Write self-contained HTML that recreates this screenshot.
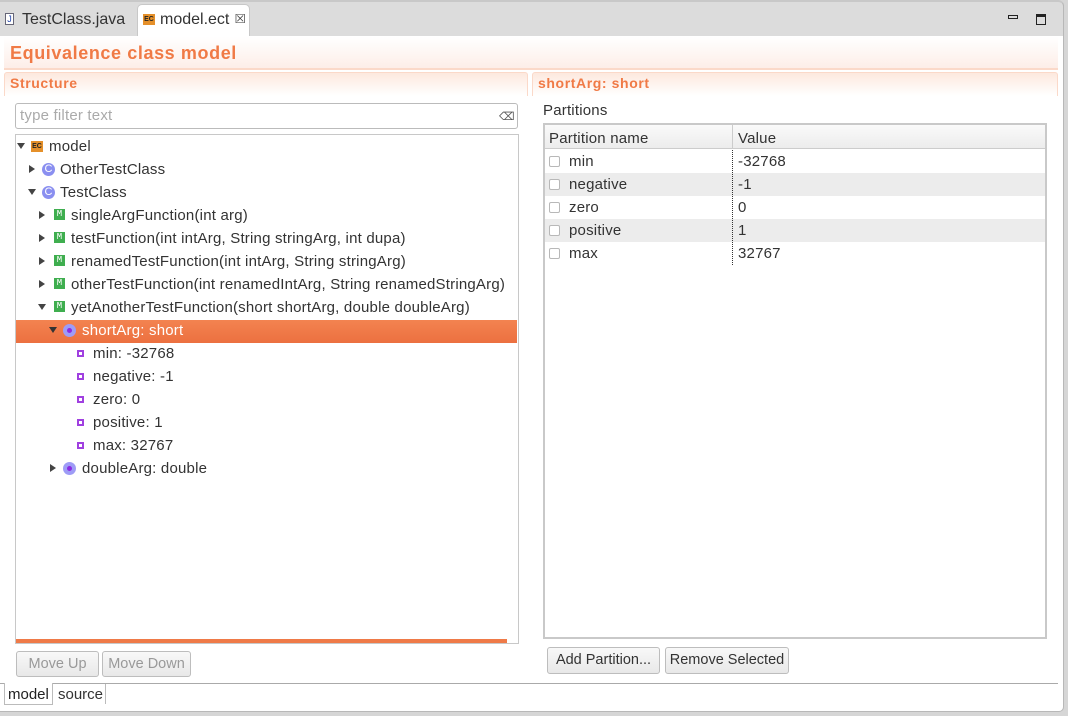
<!DOCTYPE html>
<html><head><meta charset="utf-8"><style>
*{margin:0;padding:0;box-sizing:border-box}
body{width:1068px;height:716px;background:#d6d6d6;font-family:"Liberation Sans",sans-serif;font-size:15px;letter-spacing:0.2px;color:#333;position:relative;overflow:hidden}
.a{position:absolute;white-space:nowrap}
.t{margin-top:1px}
.arr{position:absolute;width:0;height:0}
.rt{border-left:6px solid #444;border-top:4px solid transparent;border-bottom:4px solid transparent}
.dn{border-top:6px solid #444;border-left:4px solid transparent;border-right:4px solid transparent}
.c{position:absolute;width:13px;height:13px;border-radius:50%;background:#8a8ff0;color:#fff;font-size:11px;line-height:13px;text-align:center;letter-spacing:0}
.m{position:absolute;width:11px;height:11px;background:#3fae4f;color:#fff;font-size:9px;line-height:11px;text-align:center;font-family:"Liberation Mono",monospace;letter-spacing:0}
.p{position:absolute;width:13px;height:13px;border-radius:50%;background:#9e9cf6}
.p::after{content:"";position:absolute;left:4px;top:4px;width:5px;height:5px;border-radius:50%;background:#8a2be2}
.lf{position:absolute;width:7px;height:7px;border:2px solid #a040e0;background:#fff}
.btn{position:absolute;border:1px solid #bdbdbd;border-radius:3px;background:linear-gradient(#f8f8f8,#e8e8e8);text-align:center;line-height:25px;font-size:14.5px;letter-spacing:0}
.cb{position:absolute;width:11px;height:11px;border:1px solid #b8b8b8;border-radius:2px;background:#fff}
</style></head><body>
<div class="a" style="left:0;top:0;width:1064px;height:36px;background:#dcdcdc;border-top:2px solid #c8c8c8;border-right:1px solid #b8b8b8;border-radius:0 6px 0 0"></div>
<div class="a" style="left:5px;top:13px;width:9px;height:12px;border:1px solid #667;background:#fff;font-size:9px;line-height:10px;text-align:center;color:#24a;letter-spacing:0">J</div>
<div class="a" style="left:22px;top:11px;font-size:16px;letter-spacing:0">TestClass.java</div>
<div class="a" style="left:137px;top:4px;width:113px;height:33px;background:#fff;border:1px solid #c8c8c8;border-bottom:none;border-radius:5px 5px 0 0"></div>
<div class="a" style="left:143px;top:14px;width:12px;height:11px;background:#e5902a;font-size:7px;font-weight:bold;line-height:11px;text-align:center;color:#222;letter-spacing:0">EC</div>
<div class="a" style="left:160px;top:11px;font-size:16px;letter-spacing:0">model.ect</div>
<div class="a" style="left:235px;top:11px;font-size:13px">⮽</div>
<div class="a" style="left:1008px;top:15px;width:10px;height:4px;border:1px solid #222"></div>
<div class="a" style="left:1036px;top:14px;width:10px;height:11px;border:1px solid #222;border-top:3px solid #222"></div>
<div class="a" style="left:0;top:36px;width:1064px;height:676px;background:#fff;border-right:1px solid #b8b8b8;border-bottom:1px solid #b8b8b8;border-radius:0 0 5px 0"></div>
<div class="a" style="left:4px;top:37px;width:1054px;height:33px;background:linear-gradient(#fff,#fdeee8);border-bottom:2px solid #fbd9c9"></div>
<div class="a" style="left:10px;top:43px;font-size:18px;letter-spacing:0.6px;font-weight:bold;color:#f07a46">Equivalence class model</div>
<div class="a" style="left:4px;top:72px;width:524px;height:24px;background:linear-gradient(#fde8de,#fff);border:1px solid #fbd9c9;border-bottom:none;border-radius:3px 3px 0 0"></div>
<div class="a" style="left:10px;top:75px;font-size:14px;letter-spacing:0.6px;font-weight:bold;color:#f07a46">Structure</div>
<div class="a" style="left:532px;top:72px;width:526px;height:24px;background:linear-gradient(#fde8de,#fff);border:1px solid #fbd9c9;border-bottom:none;border-radius:3px 3px 0 0"></div>
<div class="a" style="left:538px;top:75px;font-size:14px;letter-spacing:0.6px;font-weight:bold;color:#f07a46">shortArg: short</div>
<div class="a" style="left:15px;top:103px;width:503px;height:26px;border:1px solid #bbb;border-radius:3px"></div>
<div class="a" style="left:20px;top:107px;color:#aaa">type filter text</div>
<div class="a" style="left:499px;top:110px;font-size:11px;color:#555">⌫</div>
<div class="a" style="left:15px;top:134px;width:504px;height:510px;border:1px solid #c8c8c8"></div>
<div class="a" style="left:16px;top:320px;width:501px;height:23px;background:linear-gradient(#f38350,#ec7040)"></div>
<div class="a" style="left:16px;top:639px;width:491px;height:4px;background:#ef7a48"></div>

<div class="arr dn" style="left:17px;top:143px"></div><div class="a" style="left:31px;top:141px;width:12px;height:11px;background:#e5902a;font-size:7px;font-weight:bold;line-height:11px;text-align:center;color:#222;letter-spacing:0">EC</div><div class="a t" style="left:49px;top:137px">model</div>
<div class="arr rt" style="left:29px;top:165px"></div><div class="c" style="left:42px;top:163px">C</div><div class="a t" style="left:60px;top:160px">OtherTestClass</div>
<div class="arr dn" style="left:28px;top:189px"></div><div class="c" style="left:42px;top:186px">C</div><div class="a t" style="left:60px;top:183px">TestClass</div>
<div class="arr rt" style="left:39px;top:211px"></div><div class="m" style="left:54px;top:209px">M</div><div class="a t" style="left:71px;top:206px">singleArgFunction(int arg)</div>
<div class="arr rt" style="left:39px;top:234px"></div><div class="m" style="left:54px;top:232px">M</div><div class="a t" style="left:71px;top:229px">testFunction(int intArg, String stringArg, int dupa)</div>
<div class="arr rt" style="left:39px;top:257px"></div><div class="m" style="left:54px;top:255px">M</div><div class="a t" style="left:71px;top:252px">renamedTestFunction(int intArg, String stringArg)</div>
<div class="arr rt" style="left:39px;top:280px"></div><div class="m" style="left:54px;top:278px">M</div><div class="a t" style="left:71px;top:275px">otherTestFunction(int renamedIntArg, String renamedStringArg)</div>
<div class="arr dn" style="left:38px;top:304px"></div><div class="m" style="left:54px;top:301px">M</div><div class="a t" style="left:71px;top:298px">yetAnotherTestFunction(short shortArg, double doubleArg)</div>
<div class="arr dn" style="left:49px;top:327px;border-top-color:#333"></div><div class="p" style="left:63px;top:324px"></div><div class="a t" style="left:82px;top:321px;color:#fff">shortArg: short</div>
<div class="lf" style="left:77px;top:350px"></div><div class="a t" style="left:93px;top:344px">min: -32768</div>
<div class="lf" style="left:77px;top:373px"></div><div class="a t" style="left:93px;top:367px">negative: -1</div>
<div class="lf" style="left:77px;top:396px"></div><div class="a t" style="left:93px;top:390px">zero: 0</div>
<div class="lf" style="left:77px;top:419px"></div><div class="a t" style="left:93px;top:413px">positive: 1</div>
<div class="lf" style="left:77px;top:442px"></div><div class="a t" style="left:93px;top:436px">max: 32767</div>
<div class="arr rt" style="left:50px;top:464px"></div><div class="p" style="left:63px;top:462px"></div><div class="a t" style="left:82px;top:459px">doubleArg: double</div>

<div class="btn" style="left:16px;top:651px;width:83px;height:26px;color:#999">Move Up</div>
<div class="btn" style="left:102px;top:651px;width:89px;height:26px;color:#999">Move Down</div>
<div class="a t" style="left:543px;top:101px">Partitions</div>
<div class="a" style="left:543px;top:123px;width:504px;height:516px;border:2px solid #c9c9c9"></div>
<div class="a" style="left:545px;top:125px;width:500px;height:24px;background:linear-gradient(#fafafa,#ececec);border-bottom:1px solid #ccc"></div>
<div class="a" style="left:732px;top:125px;width:1px;height:24px;background:#ccc"></div>
<div class="a t" style="left:549px;top:129px">Partition name</div>
<div class="a t" style="left:738px;top:129px">Value</div>
<div class="a" style="left:545px;top:173px;width:500px;height:23px;background:#ececec"></div>
<div class="a" style="left:545px;top:219px;width:500px;height:23px;background:#ececec"></div>
<div class="a" style="left:732px;top:150px;height:115px;border-left:1px dotted #333"></div>
<div class="cb" style="left:549px;top:156px"></div><div class="a t" style="left:569px;top:152px">min</div><div class="a t" style="left:738px;top:152px">-32768</div>
<div class="cb" style="left:549px;top:179px"></div><div class="a t" style="left:569px;top:175px">negative</div><div class="a t" style="left:738px;top:175px">-1</div>
<div class="cb" style="left:549px;top:202px"></div><div class="a t" style="left:569px;top:198px">zero</div><div class="a t" style="left:738px;top:198px">0</div>
<div class="cb" style="left:549px;top:225px"></div><div class="a t" style="left:569px;top:221px">positive</div><div class="a t" style="left:738px;top:221px">1</div>
<div class="cb" style="left:549px;top:248px"></div><div class="a t" style="left:569px;top:244px">max</div><div class="a t" style="left:738px;top:244px">32767</div>
<div class="btn" style="left:547px;top:647px;width:113px;height:27px">Add Partition...</div>
<div class="btn" style="left:665px;top:647px;width:124px;height:27px">Remove Selected</div>
<div class="a" style="left:0;top:683px;width:1058px;height:1px;background:#aaa"></div>
<div class="a" style="left:4px;top:683px;width:49px;height:22px;border:1px solid #bbb;border-top:none;background:#fff"></div>
<div class="a t" style="left:8px;top:685px;color:#222;letter-spacing:0">model</div>
<div class="a" style="left:105px;top:684px;width:1px;height:20px;background:#bbb"></div>
<div class="a t" style="left:58px;top:685px;letter-spacing:0">source</div>
</body></html>
